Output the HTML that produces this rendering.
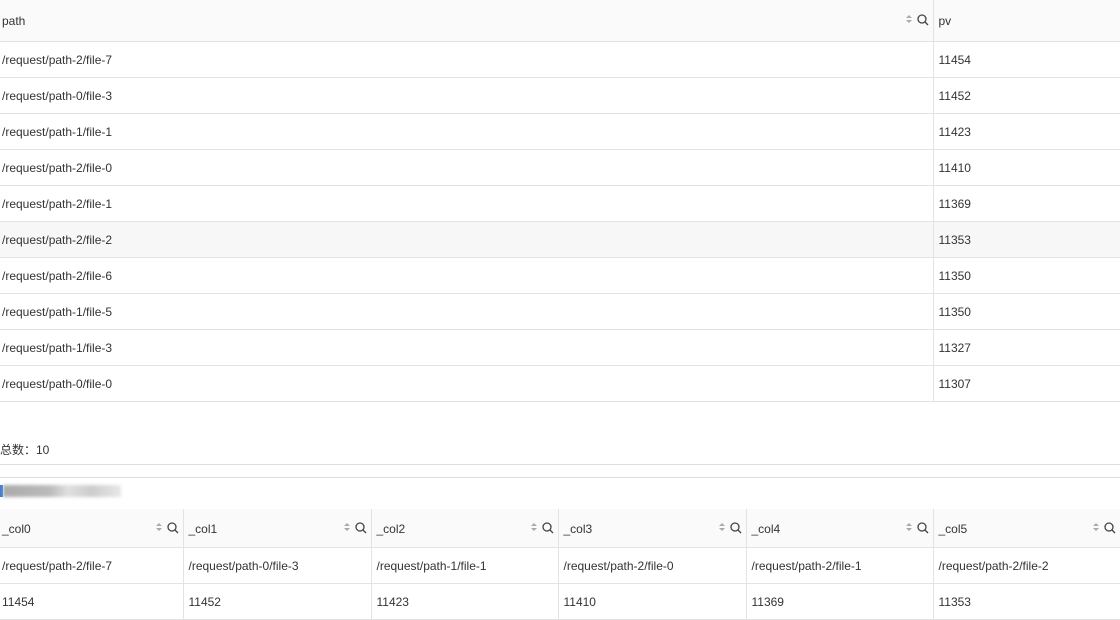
<!DOCTYPE html><html><head><style>
body{margin:0;width:1120px;height:617px;overflow:hidden;background:#fff;font-family:"Liberation Sans","Noto Sans CJK SC",sans-serif;font-size:12px;color:#333}
table{border-collapse:collapse;table-layout:fixed;position:absolute;left:0}
td,th{padding:2px 0 0 2px;text-align:left;font-weight:normal;border-bottom:1px solid #e3e3e3;white-space:nowrap;overflow:hidden}
th{background:#fafafa;position:relative}
.ic{position:absolute;right:4px;top:50%;transform:translateY(-50%);display:flex;align-items:center;gap:3px}
.bl{border-left:1px solid #e3e3e3;padding-left:5px}
</style></head><body>
<svg width="0" height="0" style="position:absolute"><defs><g id="i"><path d="M1 4L4 1L7 4ZM1 6L4 9L7 6Z" fill="#aaa"/><circle cx="17" cy="5" r="4" fill="none" stroke="#444" stroke-width="1.3"/><path d="M20 8L23 11" stroke="#444" stroke-width="1.3"/></g></defs></svg>
<table style="top:0;width:1120px"><colgroup><col style="width:933px"><col></colgroup>
<tr style="height:41px"><th>path<span class="ic"><svg width="24" height="12"><use href="#i"/></svg></span></th><th class="bl">pv</th></tr>
<tr style="height:36px"><td>/request/path-2/file-7</td><td class="bl">11454</td></tr>
<tr style="height:36px"><td>/request/path-0/file-3</td><td class="bl">11452</td></tr>
<tr style="height:36px"><td>/request/path-1/file-1</td><td class="bl">11423</td></tr>
<tr style="height:36px"><td>/request/path-2/file-0</td><td class="bl">11410</td></tr>
<tr style="height:36px"><td>/request/path-2/file-1</td><td class="bl">11369</td></tr>
<tr style="height:36px;background:#f7f7f7"><td>/request/path-2/file-2</td><td class="bl">11353</td></tr>
<tr style="height:36px"><td>/request/path-2/file-6</td><td class="bl">11350</td></tr>
<tr style="height:36px"><td>/request/path-1/file-5</td><td class="bl">11350</td></tr>
<tr style="height:36px"><td>/request/path-1/file-3</td><td class="bl">11327</td></tr>
<tr style="height:36px"><td>/request/path-0/file-0</td><td class="bl">11307</td></tr>
</table>
<div style="position:absolute;top:441px;left:0">总数：10</div>
<div style="position:absolute;top:464px;left:0;width:1120px;border-top:1px solid #ddd"></div>
<div style="position:absolute;top:477px;left:0;width:1120px;border-top:1px solid #ddd"></div>
<div style="position:absolute;top:485px;left:0;width:3px;height:12px;background:#3a7bd5"></div>
<div style="position:absolute;top:485px;left:3px;width:118px;height:12px;background:linear-gradient(90deg,#aaa,#bbb 40%,#e0e0e0 55%,#ccc 75%,#e8e8e8);filter:blur(1.5px)"></div>
<table style="top:509px;width:1120px"><colgroup><col style="width:183px"><col style="width:188px"><col style="width:187px"><col style="width:188px"><col style="width:187px"><col></colgroup>
<tr style="height:38px">
<th>_col0<span class="ic"><svg width="24" height="12"><use href="#i"/></svg></span></th>
<th class="bl">_col1<span class="ic"><svg width="24" height="12"><use href="#i"/></svg></span></th>
<th class="bl">_col2<span class="ic"><svg width="24" height="12"><use href="#i"/></svg></span></th>
<th class="bl">_col3<span class="ic"><svg width="24" height="12"><use href="#i"/></svg></span></th>
<th class="bl">_col4<span class="ic"><svg width="24" height="12"><use href="#i"/></svg></span></th>
<th class="bl">_col5<span class="ic"><svg width="24" height="12"><use href="#i"/></svg></span></th></tr>
<tr style="height:36px"><td>/request/path-2/file-7</td><td class="bl">/request/path-0/file-3</td><td class="bl">/request/path-1/file-1</td><td class="bl">/request/path-2/file-0</td><td class="bl">/request/path-2/file-1</td><td class="bl">/request/path-2/file-2</td></tr>
<tr style="height:36px"><td>11454</td><td class="bl">11452</td><td class="bl">11423</td><td class="bl">11410</td><td class="bl">11369</td><td class="bl">11353</td></tr>
</table>
</body></html>
